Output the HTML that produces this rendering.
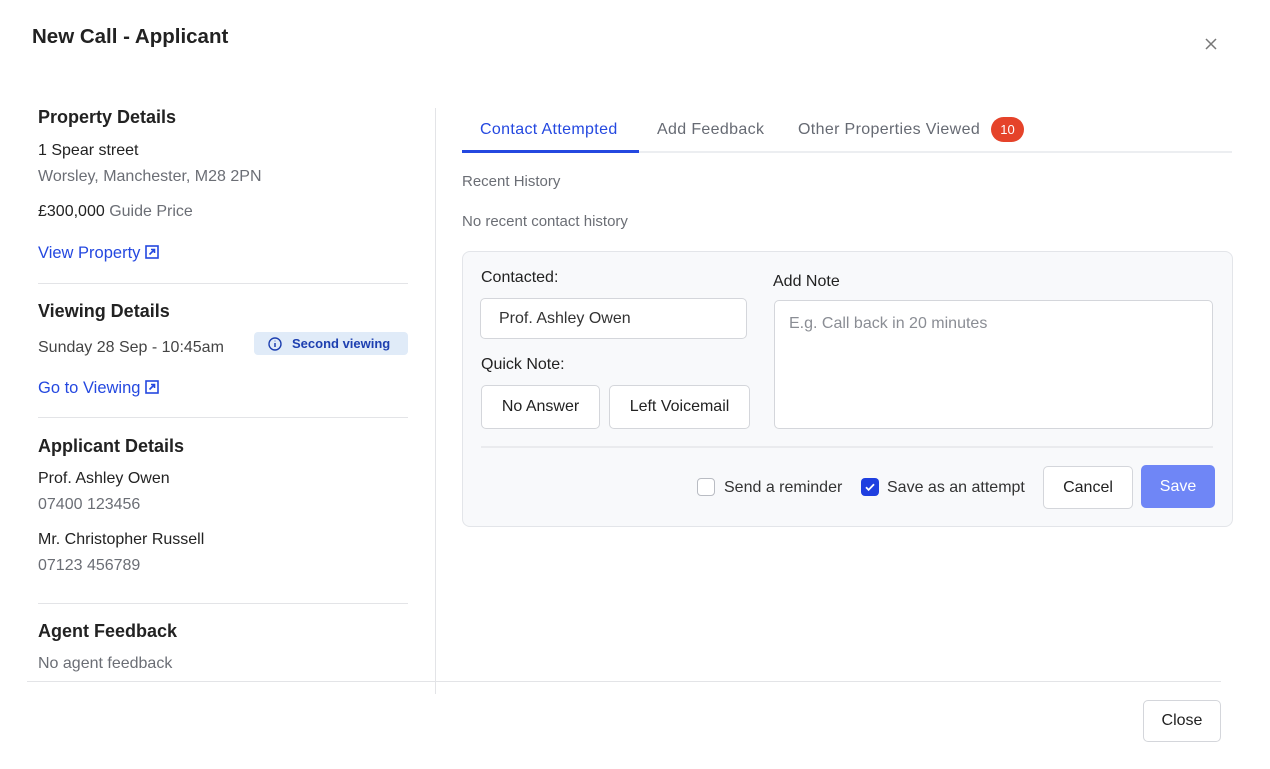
<!DOCTYPE html>
<html><head><meta charset="utf-8"><style>
*{box-sizing:border-box;margin:0;padding:0}
body{width:1270px;height:769px;background:#fff;font-family:"Liberation Sans",sans-serif;color:#1f2023;position:relative;overflow:hidden}
.a{position:absolute;white-space:nowrap;line-height:1}
.h{font-size:18px;font-weight:bold;color:#222}
.t{font-size:16px;color:#222}
.g{font-size:16px;color:#6b6e75}
.l{font-size:16.5px;color:#2448e0}
.hr{position:absolute;height:1px;background:#e3e4e7}
.btn{position:absolute;border:1px solid #d4d6db;border-radius:5px;background:#fff;font-size:16px;color:#222;display:flex;align-items:center;justify-content:center}
.tab{font-size:16px;letter-spacing:.35px}
</style></head><body>
<div class="a" style="left:32px;top:27px;font-size:20.5px;font-weight:bold;color:#222">New Call - Applicant</div>
<svg class="a" style="left:1205px;top:38px" width="12" height="12" viewBox="0 0 12 12"><path d="M1 1L11 11M11 1L1 11" stroke="#777" stroke-width="1.5"/></svg>

<div class="a h" style="left:38px;top:108px">Property Details</div>
<div class="a t" style="left:38px;top:143px">1 Spear street</div>
<div class="a g" style="left:38px;top:169px">Worsley, Manchester, M28 2PN</div>
<div class="a t" style="left:38px;top:204px">£300,000 <span style="color:#6b6e75">Guide Price</span></div>
<div class="a l" style="left:38px;top:245px">View Property <svg width="14" height="14" viewBox="0 0 14 14" style="vertical-align:-1px"><rect x="1" y="1" width="12" height="12" fill="none" stroke="#2448e0" stroke-width="1.6"/><path d="M4.5 9.5L9.5 4.5M6 4.5h3.5v3.5" fill="none" stroke="#2448e0" stroke-width="1.6"/></svg></div>
<div class="hr" style="left:38px;top:283px;width:370px"></div>
<div class="a h" style="left:38px;top:302px">Viewing Details</div>
<div class="a t" style="left:38px;top:340px;color:#444">Sunday 28 Sep - 10:45am</div>
<div class="a" style="left:254px;top:332px;width:154px;height:23px;background:#e0ebf8;border-radius:4px;font-size:13px;font-weight:bold;color:#1d3fb0;display:flex;align-items:center;padding-left:14px"><svg width="14" height="14" viewBox="0 0 14 14" style="margin-right:10px"><circle cx="7" cy="7" r="6" fill="none" stroke="#1d3fb0" stroke-width="1.4"/><path d="M7 6v4M7 3.8v.4" stroke="#1d3fb0" stroke-width="1.5"/></svg>Second viewing</div>
<div class="a l" style="left:38px;top:380px">Go to Viewing <svg width="14" height="14" viewBox="0 0 14 14" style="vertical-align:-1px"><rect x="1" y="1" width="12" height="12" fill="none" stroke="#2448e0" stroke-width="1.6"/><path d="M4.5 9.5L9.5 4.5M6 4.5h3.5v3.5" fill="none" stroke="#2448e0" stroke-width="1.6"/></svg></div>
<div class="hr" style="left:38px;top:417px;width:370px"></div>
<div class="a h" style="left:38px;top:437px">Applicant Details</div>
<div class="a t" style="left:38px;top:471px">Prof. Ashley Owen</div>
<div class="a g" style="left:38px;top:497px">07400 123456</div>
<div class="a t" style="left:38px;top:532px">Mr. Christopher Russell</div>
<div class="a g" style="left:38px;top:558px">07123 456789</div>
<div class="hr" style="left:38px;top:603px;width:370px"></div>
<div class="a h" style="left:38px;top:622px">Agent Feedback</div>
<div class="a g" style="left:38px;top:656px">No agent feedback</div>

<div style="position:absolute;left:435px;top:108px;width:1px;height:586px;background:#e3e4e7"></div>
<div class="hr" style="left:27px;top:681px;width:1194px"></div>
<div class="btn" style="left:1143px;top:700px;width:78px;height:42px">Close</div>

<div class="hr" style="left:462px;top:151px;width:770px;height:2px;background:#eceef1"></div>
<div style="position:absolute;left:462px;top:150px;width:177px;height:3px;background:#2448e0"></div>
<div class="a tab" style="left:480px;top:122px;color:#2448e0">Contact Attempted</div>
<div class="a tab" style="left:657px;top:122px;color:#666a73">Add Feedback</div>
<div class="a tab" style="left:798px;top:122px;color:#666a73">Other Properties Viewed</div>
<div class="a" style="left:991px;top:117px;width:33px;height:25px;border-radius:13px;background:#e5432a;color:#fff;font-size:13px;display:flex;align-items:center;justify-content:center">10</div>
<div class="a" style="left:462px;top:174px;font-size:15px;color:#6b6e75">Recent History</div>
<div class="a" style="left:462px;top:214px;font-size:15px;color:#6b6e75">No recent contact history</div>

<div style="position:absolute;left:462px;top:251px;width:771px;height:276px;background:#f8f9fb;border:1px solid #e3e5e9;border-radius:8px"></div>
<div class="a t" style="left:481px;top:270px">Contacted:</div>
<div class="btn" style="left:480px;top:298px;width:267px;height:41px;justify-content:flex-start;padding-left:18px;color:#333">Prof. Ashley Owen</div>
<div class="a t" style="left:481px;top:357px">Quick Note:</div>
<div class="btn" style="left:481px;top:385px;width:119px;height:44px">No Answer</div>
<div class="btn" style="left:609px;top:385px;width:141px;height:44px">Left Voicemail</div>
<div class="a t" style="left:773px;top:274px">Add Note</div>
<div class="btn" style="left:774px;top:300px;width:439px;height:129px;align-items:flex-start;justify-content:flex-start;padding:14px 14px;color:#8a8d94">E.g. Call back in 20 minutes</div>
<div class="hr" style="left:481px;top:446px;width:732px;height:2px;background:#eaebee"></div>
<div style="position:absolute;left:697px;top:478px;width:18px;height:18px;border:1px solid #b9bcc3;border-radius:4px;background:#fff"></div>
<div class="a t" style="left:724px;top:480px;color:#333">Send a reminder</div>
<div style="position:absolute;left:861px;top:478px;width:18px;height:18px;border-radius:4px;background:#1f3fe0"><svg width="18" height="18" viewBox="0 0 18 18"><path d="M5 9.3l2.6 2.6L13 6.3" fill="none" stroke="#fff" stroke-width="1.8"/></svg></div>
<div class="a t" style="left:887px;top:480px;color:#333">Save as an attempt</div>
<div class="btn" style="left:1043px;top:466px;width:90px;height:43px">Cancel</div>
<div class="btn" style="left:1141px;top:465px;width:74px;height:43px;background:#6f86f6;border-color:#6f86f6;color:#fff">Save</div>
</body></html>
